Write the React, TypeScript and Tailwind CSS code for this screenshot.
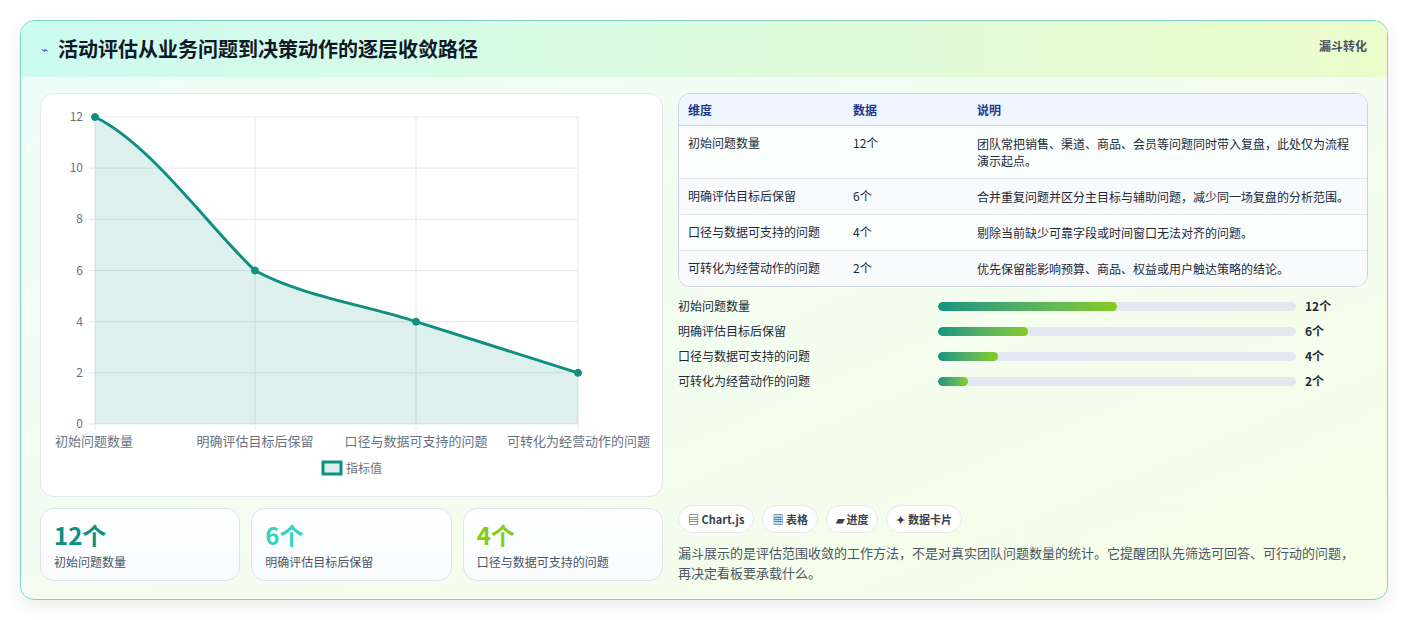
import React from "react";

const F = { fontFamily: '"Noto Sans CJK SC", "Noto Sans", sans-serif' };

const rows = [
  ["初始问题数量", "12个", "团队常把销售、渠道、商品、会员等问题同时带入复盘，此处仅为流程演示起点。", 12],
  ["明确评估目标后保留", "6个", "合并重复问题并区分主目标与辅助问题，减少同一场复盘的分析范围。", 6],
  ["口径与数据可支持的问题", "4个", "剔除当前缺少可靠字段或时间窗口无法对齐的问题。", 4],
  ["可转化为经营动作的问题", "2个", "优先保留能影响预算、商品、权益或用户触达策略的结论。", 2],
] as const;

function Chart() {
  const x0 = 54, x1 = 537, y0 = 23, y1 = 330;
  const xs = [54, 214, 375, 537];
  const yv = (v: number) => y1 - (v / 12) * (y1 - y0);
  const vals = [12, 6, 4, 2];
  const pts = vals.map((v, i) => [xs[i], yv(v)]);
  const path = `M${pts[0][0]},${pts[0][1]} C110,50 170,${yv(7.6)} ${pts[1][0]},${pts[1][1]} C260,${yv(5)} 330,${yv(4.6)} ${pts[2][0]},${pts[2][1]} L${pts[3][0]},${pts[3][1]}`;
  return (
    <svg width="623" height="402" className="block">
      {[0, 2, 4, 6, 8, 10, 12].map((v) => (
        <g key={v}>
          <line x1={x0 - 6} x2={x1} y1={yv(v)} y2={yv(v)} stroke="#e5e7eb" />
          <text x={x0 - 12} y={yv(v) + 4} textAnchor="end" fontSize="12" fill="#6b7280" style={F}>{v}</text>
        </g>
      ))}
      {xs.map((x) => <line key={x} x1={x} x2={x} y1={y0} y2={y1 + 6} stroke="#e5e7eb" />)}
      <path d={`${path} L${x1},${y1} L${x0},${y1} Z`} fill="#0d9488" fillOpacity="0.14" />
      <path d={path} fill="none" stroke="#0f8f80" strokeWidth="3" />
      {pts.map(([x, y], i) => <circle key={i} cx={x} cy={y} r="3.5" fill="#0f8f80" stroke="#0f8f80" />)}
      {["初始问题数量", "明确评估目标后保留", "口径与数据可支持的问题", "可转化为经营动作的问题"].map((t, i) => (
        <text key={t} x={xs[i]} y={352} textAnchor={i === 0 ? "start" : i === 3 ? "end" : "middle"} dx={i === 0 ? -40 : i === 3 ? 72 : 0} fontSize="13" fill="#6b7280" style={F}>{t}</text>
      ))}
      <rect x="282" y="368" width="18" height="12" fill="#dbefec" stroke="#0f8f80" strokeWidth="3" />
      <text x="305" y="379" fontSize="12" fill="#6b7280" style={F}>指标值</text>
    </svg>
  );
}

export default function App() {
  return (
    <div style={F} className="w-[1408px] h-[620px] bg-white pt-5 px-5">
      <div className="h-[580px] rounded-[14px] border border-[#7dd3c4] overflow-hidden shadow-[0_6px_16px_rgba(0,0,0,0.08)] bg-gradient-to-br from-[#effdfa] to-[#f7fee7] flex flex-col">
        <div className="h-[56px] shrink-0 bg-gradient-to-r from-[#ccfbf1] to-[#ecfccb] flex items-center justify-between px-5">
          <div className="flex items-center gap-[10px]">
            <span className="text-[#2563eb] text-[12px]">⌁</span>
            <span className="text-[20px] font-bold text-[#111827]">活动评估从业务问题到决策动作的逐层收敛路径</span>
          </div>
          <span className="text-[12px] font-bold text-[#4b5563] self-start mt-4">漏斗转化</span>
        </div>
        <div className="flex flex-1 px-[19px] pt-4 pb-4 gap-[15px]">
          <div className="w-[623px] flex flex-col gap-[11px]">
            <div className="h-[404px] bg-white rounded-[14px] border border-[#e2e8f0]"><Chart /></div>
            <div className="flex gap-[11px]">
              {[["12个", "text-[#0f8f80]", "初始问题数量"], ["6个", "text-[#2dd4bf]", "明确评估目标后保留"], ["4个", "text-[#84cc16]", "口径与数据可支持的问题"]].map(([v, c, l]) => (
                <div key={l} className="flex-1 h-[73px] rounded-[14px] border border-[#dbe5ef] bg-gradient-to-b from-white to-[#f8fafc] px-[13px] pt-[12px]">
                  <div className={`text-[24px] font-bold leading-[28px] ${c}`}>{v}</div>
                  <div className="text-[12px] text-[#4b5563] mt-[4px]">{l}</div>
                </div>
              ))}
            </div>
          </div>
          <div className="flex-1 flex flex-col">
            <div className="rounded-[12px] border border-[#cbd5e1] overflow-hidden text-[12px] text-[#1f2937] bg-white">
              <div className="flex h-[32px] items-center bg-[#eff6ff] border-b border-[#cbd5e1] text-[#1e3a8a] font-bold px-[9px]">
                <div className="w-[165px]">维度</div><div className="w-[124px]">数据</div><div>说明</div>
              </div>
              {rows.map((r, i) => (
                <div key={r[0]} className={`flex px-[9px] py-[9px] ${i ? "border-t border-[#e5e7eb]" : ""} ${i % 2 ? "bg-[#f8fafc]" : "bg-[#f0fdfa]/40"}`}>
                  <div className="w-[165px] leading-[16px]">{r[0]}</div>
                  <div className="w-[124px] leading-[16px]">{r[1]}</div>
                  <div className="flex-1 leading-[17px]">{r[2]}</div>
                </div>
              ))}
            </div>
            <div className="mt-[11px] flex flex-col gap-[9px] text-[12px] text-[#1f2937]">
              {rows.map((r) => (
                <div key={r[0]} className="flex items-center h-[16px]">
                  <div className="w-[260px]">{r[0]}</div>
                  <div className="w-[358px] h-[9px] rounded-full bg-[#e2e8f0] overflow-hidden">
                    <div className="h-full rounded-full bg-gradient-to-r from-[#0f9480] to-[#84cc16]" style={{ width: `${(r[3] / 24) * 100}%` }} />
                  </div>
                  <div className="ml-[9px] font-bold">{r[1]}</div>
                </div>
              ))}
            </div>
            <div className="mt-auto flex gap-[8px] text-[11px] font-bold text-[#374151]">
              {["▤ Chart.js", "▦ 表格", "▰ 进度", "✦ 数据卡片"].map((t) => (
                <span key={t} className="h-[28px] px-[9px] flex items-center rounded-full bg-white border border-[#e5e7eb]">{t}</span>
              ))}
            </div>
            <p className="mt-[10px] text-[13px] leading-[20px] text-[#4b5563] pr-[2px]">漏斗展示的是评估范围收敛的工作方法，不是对真实团队问题数量的统计。它提醒团队先筛选可回答、可行动的问题，再决定看板要承载什么。</p>
          </div>
        </div>
      </div>
    </div>
  );
}
